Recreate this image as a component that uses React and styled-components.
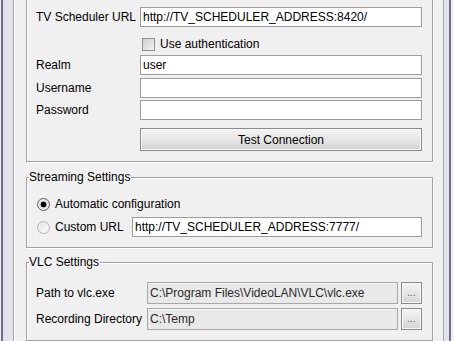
import React from 'react';
import styled, { createGlobalStyle } from 'styled-components';

const GlobalStyle = createGlobalStyle`
  html, body {
    margin: 0;
    padding: 0;
    background: #f0f0f0;
  }
  body {
    font-family: "Liberation Sans", Arial, sans-serif;
    font-size: 12px;
    color: #000;
  }
`;

const Window = styled.div`
  display: flex;
  width: 454px;
  height: 341px;
  overflow: hidden;
  background: #f0f0f0;
`;

const FrameLeft = styled.div`
  flex: none;
  width: 15px;
  background: linear-gradient(
    to right,
    #f0f0f0 0 1px,
    #6b6f8d 1px 3px,
    #e2e2ea 3px 13px,
    #a8a8a8 13px 14px,
    #ffffff 14px 15px
  );
`;

const FrameRight = styled.div`
  flex: none;
  width: 11px;
  background: linear-gradient(
    to right,
    #a8a8a8 0 1px,
    #e2e2ea 1px 6px,
    #6b6f8d 6px 8px,
    #f0f0f0 8px 11px
  );
`;

const Content = styled.div`
  flex: 1;
  min-width: 0;
  display: flex;
  flex-direction: column;
`;

const Panel = styled.fieldset`
  margin: ${(p) => p.$mt || 0}px 10px 0 11px;
  padding: 0;
  min-inline-size: 0;
  border: 1px solid #a0a0a0;
  box-shadow: inset 1px 1px 0 #fff, 1px 1px 0 #fff;
  flex: none;
  ${(p) =>
    p.$clipped &&
    `
    border-top: none;
    box-shadow: inset 1px 0 0 #fff, 1px 1px 0 #fff;
  `}
`;

const Legend = styled.legend`
  margin-left: 2px;
  padding: 0 1px 0 0;
  font-size: 12px;
  line-height: 14px;
`;

const Body = styled.div`
  display: flex;
  flex-direction: column;
  padding: ${(p) => p.$pad};
`;

const Row = styled.div`
  display: flex;
  align-items: center;
  height: ${(p) => p.$h || 20}px;
  margin-top: ${(p) => p.$mt || 0}px;
  padding-left: ${(p) => p.$indent || 0}px;
`;

const Label = styled.label`
  flex: none;
  width: ${(p) => p.$w}px;
  white-space: nowrap;
  line-height: 14px;
`;

const TextField = styled.input`
  flex: 1;
  min-width: 0;
  box-sizing: border-box;
  height: ${(p) => p.$h || 20}px;
  margin: 0;
  padding: 0 2px;
  border: 1px solid #9c9c9c;
  background: #fff;
  font: 12px "Liberation Sans", Arial, sans-serif;
  color: #000;
  outline: none;

  &:disabled {
    background: #e9e9e9;
    border-color: #a8a8a8;
    color: #2a2a2a;
    box-shadow: inset 0 1px 0 #f6f6f6;
  }
`;

const CheckBox = styled.input.attrs({ type: 'checkbox' })`
  appearance: none;
  flex: none;
  width: 13px;
  height: 13px;
  margin: 0 5px 0 0;
  box-sizing: border-box;
  border: 1px solid #8e8f8f;
  background: linear-gradient(135deg, #cfcfcf, #f4f4f4);
`;

const Radio = styled.input.attrs({ type: 'radio' })`
  appearance: none;
  position: relative;
  flex: none;
  width: 13px;
  height: 13px;
  margin: 0 5px 0 0;
  box-sizing: border-box;
  border-radius: 50%;
  border: 1px solid ${(p) => (p.checked ? '#5f5f5f' : '#b4b4b4')};
  background: ${(p) =>
    p.checked
      ? 'radial-gradient(circle, #000 0 2.6px, #d8d8d8 3.2px, #f6f6f6 6px)'
      : 'linear-gradient(135deg, #e6e6e6, #fbfbfb)'};
`;

const CheckText = styled.span`
  white-space: nowrap;
  line-height: 14px;
`;

const PushButton = styled.button`
  box-sizing: border-box;
  height: ${(p) => p.$h || 23}px;
  width: ${(p) => (p.$w ? `${p.$w}px` : 'auto')};
  flex: ${(p) => (p.$w ? 'none' : '1')};
  margin: 0 0 0 ${(p) => p.$ml || 0}px;
  padding: 0;
  border: 1px solid #8a8a8a;
  box-shadow: inset 0 0 0 1px #f9f9f9;
  background: linear-gradient(#f4f4f4, #e6e6e6 50%, #d3d3d3);
  font: ${(p) => p.$fs || 12}px "Liberation Sans", Arial, sans-serif;
  color: ${(p) => p.$color || '#000'};
  line-height: 1;
`;

export default function App() {
  return (
    <>
      <GlobalStyle />
      <Window>
        <FrameLeft />
        <Content>
          <Panel $clipped>
            <Body $pad="7px 10px 10px 9px">
              <Row>
                <Label $w={104}>TV Scheduler URL</Label>
                <TextField readOnly defaultValue="http://TV_SCHEDULER_ADDRESS:8420/" />
              </Row>
              <Row $h={14} $mt={10} $indent={106}>
                <CheckBox readOnly />
                <CheckText>Use authentication</CheckText>
              </Row>
              <Row $mt={4}>
                <Label $w={104}>Realm</Label>
                <TextField readOnly defaultValue="user" />
              </Row>
              <Row $mt={3}>
                <Label $w={104}>Username</Label>
                <TextField readOnly defaultValue="" />
              </Row>
              <Row $mt={2}>
                <Label $w={104}>Password</Label>
                <TextField readOnly type="password" defaultValue="" />
              </Row>
              <Row $h={23} $mt={8} $indent={104}>
                <PushButton>Test Connection</PushButton>
              </Row>
            </Body>
          </Panel>

          <Panel $mt={8}>
            <Legend>Streaming Settings</Legend>
            <Body $pad="10px 10px 10px 10px">
              <Row>
                <Radio checked readOnly name="stream" />
                <CheckText>Automatic configuration</CheckText>
              </Row>
              <Row $mt={3}>
                <Radio checked={false} readOnly name="stream" />
                <Label $w={77}>Custom URL</Label>
                <TextField readOnly defaultValue="http://TV_SCHEDULER_ADDRESS:7777/" />
              </Row>
            </Body>
          </Panel>

          <Panel $mt={7}>
            <Legend>VLC Settings</Legend>
            <Body $pad="13px 10px 10px 9px">
              <Row $h={22}>
                <Label $w={111}>Path to vlc.exe</Label>
                <TextField $h={22} disabled defaultValue="C:\Program Files\VideoLAN\VLC\vlc.exe" />
                <PushButton $w={21} $h={22} $ml={3} $fs={10} $color="#555">...</PushButton>
              </Row>
              <Row $h={22} $mt={4}>
                <Label $w={111}>Recording Directory</Label>
                <TextField $h={22} disabled defaultValue="C:\Temp" />
                <PushButton $w={21} $h={22} $ml={3} $fs={10} $color="#555">...</PushButton>
              </Row>
            </Body>
          </Panel>
        </Content>
        <FrameRight />
      </Window>
    </>
  );
}
